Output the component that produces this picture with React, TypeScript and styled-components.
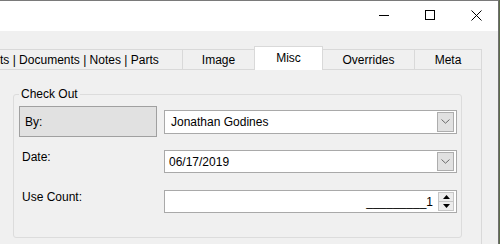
import { createGlobalStyle, styled, css } from 'styled-components'

const GlobalStyle = createGlobalStyle`
  html, body {
    margin: 0;
    padding: 0;
    background: #5d6b4c;
  }
  body {
    font-family: 'Liberation Sans', Arial, sans-serif;
    font-size: 12px;
    color: #000;
  }
`

const Window = styled.div`
  width: 499px;
  height: 244px;
  box-sizing: border-box;
  border-top: 1px solid #7a7a7a;
  border-right: 1px solid #6f6f6f;
  background: #f0f0f0;
  display: flex;
  flex-direction: column;
  overflow: hidden;
`

const TitleBar = styled.div`
  height: 30px;
  flex-shrink: 0;
  background: #fff;
  display: flex;
  justify-content: flex-end;
`

const CaptionButtons = styled.div`
  display: flex;
  margin-right: -1px;
`

const CaptionButton = styled.div`
  width: 46px;
  height: 30px;
  padding-bottom: 2px;
  box-sizing: border-box;
  display: flex;
  align-items: center;
  justify-content: center;
`

const TabStrip = styled.div`
  height: 38px;
  flex-shrink: 0;
  display: flex;
  align-items: flex-end;
`

const Tab = styled.div<{ $width: number; $selected?: boolean; $first?: boolean }>`
  position: relative;
  width: ${(p) => p.$width}px;
  height: 20px;
  box-sizing: border-box;
  border: 1px solid #d9d9d9;
  border-bottom: none;
  margin-left: -1px;
  display: flex;
  align-items: center;
  justify-content: center;
  background: #f0f0f0;
  line-height: 14px;
  white-space: nowrap;
  ${(p) =>
    p.$first &&
    css`
      margin-left: 0;
      border-left: none;
      justify-content: flex-start;
    `}
  ${(p) =>
    p.$selected &&
    css`
      z-index: 1;
      height: 24px;
      margin-bottom: -1px;
      padding-bottom: 1px;
      background: #fff;
    `}
`

const TabPanel = styled.div`
  width: 482px;
  flex: 1;
  box-sizing: border-box;
  border-top: 1px solid #d9d9d9;
  border-right: 1px solid #d9d9d9;
  padding: 24px 0 0 13px;
`

const GroupBox = styled.div`
  position: relative;
  width: 449px;
  height: 144px;
  box-sizing: border-box;
  border: 1px solid #dcdcdc;
  border-radius: 3px;
  padding: 11px 0 0 5px;
`

const Legend = styled.span`
  position: absolute;
  top: -8px;
  left: 5px;
  padding: 0 2px;
  line-height: 14px;
  background: #f0f0f0;
`

const Row = styled.div<{ $gapTop?: number; $height: number }>`
  display: flex;
  align-items: center;
  gap: 7px;
  height: ${(p) => p.$height}px;
  margin-top: ${(p) => p.$gapTop ?? 0}px;
`

const LabelBox = styled.div`
  width: 138px;
  height: 31px;
  box-sizing: border-box;
  border: 1px solid #a0a0a0;
  background: #e1e1e1;
  padding-left: 5px;
  display: flex;
  align-items: center;
`

const Label = styled.div`
  width: 138px;
  box-sizing: border-box;
  align-self: flex-start;
  padding-left: 3px;
  line-height: 14px;
`

const Field = styled.div<{ $height: number }>`
  width: 293px;
  height: ${(p) => p.$height}px;
  box-sizing: border-box;
  border: 1px solid #a9a9a9;
  background: #fff;
  padding: 1px;
  display: flex;
  align-items: stretch;
`

const FieldText = styled.div<{ $indent: number; $right?: boolean }>`
  flex: 1;
  display: flex;
  align-items: center;
  justify-content: ${(p) => (p.$right ? 'flex-end' : 'flex-start')};
  padding-left: ${(p) => p.$indent}px;
  padding-right: ${(p) => (p.$right ? 5 : 0)}px;
  white-space: nowrap;
`

const DropButton = styled.div`
  width: 17px;
  margin-right: 1px;
  box-sizing: border-box;
  border: 1px solid #adadad;
  background: #e1e1e1;
  display: flex;
  align-items: center;
  justify-content: center;
`

const Spinner = styled.div`
  width: 16px;
  margin-right: 1px;
  display: flex;
  flex-direction: column;
`

const SpinHalf = styled.div`
  flex: 1;
  box-sizing: border-box;
  border: 1px solid #c6c6c6;
  background: #ececec;
  display: flex;
  align-items: center;
  justify-content: center;
  & + & {
    border-top: none;
  }
`

const Chevron = () => (
  <svg width="9" height="5" viewBox="0 0 9 5">
    <polyline points="0.5,0.5 4.5,4.2 8.5,0.5" fill="none" stroke="#6a6a6a" strokeWidth="1" />
  </svg>
)

const Arrow = ({ up }: { up?: boolean }) => (
  <svg width="7" height="4" viewBox="0 0 7 4">
    <polygon points={up ? '3.5,0 7,4 0,4' : '0,0 7,0 3.5,4'} fill="#000" />
  </svg>
)

const ComboField = ({ value, height, indent }: { value: string; height: number; indent: number }) => (
  <Field $height={height}>
    <FieldText $indent={indent}>{value}</FieldText>
    <DropButton>
      <Chevron />
    </DropButton>
  </Field>
)

const tabs = [
  { label: 'ts | Documents | Notes | Parts', width: 183 },
  { label: 'Image', width: 73 },
  { label: 'Misc', width: 69, selected: true },
  { label: 'Overrides', width: 93 },
  { label: 'Meta', width: 68 }
]

export default function App() {
  return (
    <>
      <GlobalStyle />
      <Window>
        <TitleBar>
          <CaptionButtons>
            <CaptionButton>
              <svg width="10" height="10" viewBox="0 0 10 10">
                <line x1="0" y1="5.5" x2="10" y2="5.5" stroke="#000" />
              </svg>
            </CaptionButton>
            <CaptionButton>
              <svg width="10" height="10" viewBox="0 0 10 10">
                <rect x="0.5" y="0.5" width="9" height="9" fill="none" stroke="#000" />
              </svg>
            </CaptionButton>
            <CaptionButton>
              <svg width="11" height="11" viewBox="0 0 11 11">
                <line x1="0.5" y1="0.5" x2="10.5" y2="10.5" stroke="#000" />
                <line x1="10.5" y1="0.5" x2="0.5" y2="10.5" stroke="#000" />
              </svg>
            </CaptionButton>
          </CaptionButtons>
        </TitleBar>

        <TabStrip>
          {tabs.map((t, i) => (
            <Tab key={t.label} $width={t.width} $selected={t.selected} $first={i === 0}>
              {t.label}
            </Tab>
          ))}
        </TabStrip>

        <TabPanel>
          <GroupBox>
            <Legend>Check Out</Legend>
            <Row $height={31}>
              <LabelBox>By:</LabelBox>
              <ComboField value="Jonathan Godines" height={24} indent={5} />
            </Row>
            <Row $height={23} $gapTop={13}>
              <Label>Date:</Label>
              <ComboField value="06/17/2019" height={23} indent={3} />
            </Row>
            <Row $height={23} $gapTop={17}>
              <Label>Use Count:</Label>
              <Field $height={23}>
                <FieldText $indent={3} $right>
                  _________1
                </FieldText>
                <Spinner>
                  <SpinHalf>
                    <Arrow up />
                  </SpinHalf>
                  <SpinHalf>
                    <Arrow />
                  </SpinHalf>
                </Spinner>
              </Field>
            </Row>
          </GroupBox>
        </TabPanel>
      </Window>
    </>
  )
}
